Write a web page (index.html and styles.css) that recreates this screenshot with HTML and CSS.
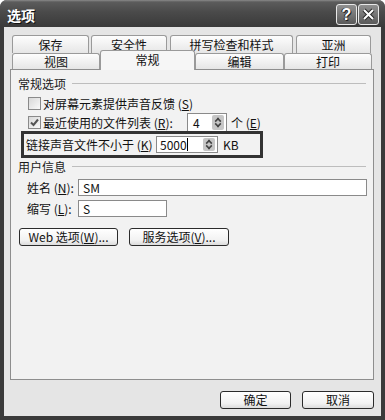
FILE: index.html
```html
<!DOCTYPE html>
<html lang="zh-CN">
  <head>
    <meta charset="UTF-8" />
    <title>选项</title>
    <link rel="stylesheet" href="styles.css">
  </head>
  <body>
    <div class="window">
      <div class="titlebar">
        <span class="title">选项</span>
        <span class="tb-btn help">?</span>
        <span class="tb-btn close">
          <svg width="13" height="13" viewBox="0 0 13 13">
            <path d="M2 2 L11 11 M11 2 L2 11" stroke="#2a2a2a" stroke-width="4" />
            <path d="M2 2 L11 11 M11 2 L2 11" stroke="#fff" stroke-width="2" />
          </svg>
        </span>
      </div>

      <div class="client">
        <div class="tabs">
          <div class="tab-row back">
            <div class="tab w77">保存</div>
            <div class="tab w76 gap2">安全性</div>
            <div class="tab w123 gap3">拼写检查和样式</div>
            <div class="tab w75 gap3">亚洲</div>
          </div>
          <div class="tab-row front">
            <div class="tab w88">视图</div>
            <div class="tab w95 selected">常规</div>
            <div class="tab w89">编辑</div>
            <div class="tab w88">打印</div>
          </div>
        </div>

        <div class="panel">
          <div class="group-title first"><span>常规选项</span><i class="rule"></i></div>

          <div class="row cb-row first-cb">
            <span class="checkbox"></span>
            <span>对屏幕元素提供声音反馈 (<u>S</u>)</span>
          </div>

          <div class="row cb-row second-cb">
            <span class="checkbox checked">
              <svg width="11" height="11" viewBox="0 0 11 11">
                <path d="M2 5.5 L4.5 8 L9 2.5" fill="none" stroke="#555" stroke-width="2" />
              </svg>
            </span>
            <span class="list-label">最近使用的文件列表 (<u>R</u>):</span>
            <span class="field spin-field small">
              <span class="value">4</span>
              <span class="spin"></span>
            </span>
            <span class="after">个 (<u>E</u>)</span>
          </div>

          <div class="highlight">
            <span class="link-label">链接声音文件不小于 (<u>K</u>)</span>
            <span class="field spin-field mid">
              <span class="value">5000<i class="caret"></i></span>
              <span class="spin"></span>
            </span>
            <span class="after">KB</span>
          </div>

          <div class="group-title"><span>用户信息</span><i class="rule"></i></div>

          <div class="row text-row name-row">
            <span class="text-label">姓名 (<u>N</u>):</span>
            <span class="field wide"><span class="value">SM</span></span>
          </div>
          <div class="row text-row abbr-row">
            <span class="text-label">缩写 (<u>L</u>):</span>
            <span class="field narrow"><span class="value">S</span></span>
          </div>

          <div class="row btn-row">
            <button class="btn web">Web 选项(<u>W</u>)...</button>
            <button class="btn service">服务选项(<u>V</u>)...</button>
          </div>
        </div>

        <div class="footer">
          <button class="btn ok">确定</button>
          <button class="btn cancel">取消</button>
        </div>
      </div>
    </div>
  </body>
</html>
```

FILE: styles.css
```css
body {
  margin: 0;
  background: #fff;
  font-family: "Noto Sans CJK SC", "Liberation Sans", sans-serif;
  font-size: 12px;
  color: #111;
}

.window {
  width: 385px;
  height: 420px;
  background: #3a3a3a;
  border-radius: 7px 7px 0 0;
  display: flex;
  flex-direction: column;
  overflow: hidden;
}

/* title bar */
.titlebar {
  height: 27px;
  flex: none;
  box-sizing: border-box;
  padding: 2px 6px 0 7px;
  display: flex;
  align-items: center;
  background: linear-gradient(#8a8a8a 0, #5c5c5c 2px, #4a4a4a 45%, #3a3a3a 100%);
}
.title {
  flex: 1;
  color: #fff;
  font-size: 14px;
  font-weight: bold;
  text-shadow: 1px 1px 0 #111;
}
.tb-btn {
  width: 21px;
  height: 21px;
  box-sizing: border-box;
  margin-left: 1px;
  border: 1px solid #e8e8e8;
  border-radius: 3px;
  background: linear-gradient(#909090, #5a5a5a);
  display: flex;
  align-items: center;
  justify-content: center;
}
.help {
  color: #fff;
  font-family: "Liberation Sans", sans-serif;
  font-size: 16px;
  font-weight: bold;
  text-shadow: 1px 1px 0 #222, -1px 0 0 #222;
}

/* client area */
.client {
  flex: 1;
  margin: 0 4px 4px;
  background: #e5e5e5;
  display: flex;
  flex-direction: column;
}

.tabs {
  margin-top: 8px;
  padding-left: 8px;
}
.tab-row {
  display: flex;
}
.tab-row.back {
  height: 18px;
}
.tab-row.front {
  height: 20px;
  margin-top: -3px;
}
.tab {
  box-sizing: border-box;
  height: 18px;
  line-height: 17px;
  text-align: center;
  border: 1px solid #9a9a9a;
  border-bottom: none;
  border-radius: 3px 3px 0 0;
  background: linear-gradient(#fdfdfd, #e6e6e6);
}
.front .tab {
  height: 16px;
  line-height: 16px;
  margin-top: 3px;
}
.front .tab.selected {
  position: relative;
  z-index: 1;
  height: 20px;
  margin-top: 0;
  line-height: 18px;
  background: #f6f6f6;
}
.w75 { width: 75px; }
.w76 { width: 76px; }
.w77 { width: 77px; }
.w88 { width: 88px; }
.w89 { width: 89px; }
.w95 { width: 95px; }
.w123 { width: 123px; }
.gap2 { margin-left: 2px; }
.gap3 { margin-left: 3px; }

/* page */
.panel {
  flex: 1;
  margin: -1px 7px 0 6px;
  border: 1px solid #8e8e8e;
  background: #f2f2f2;
  display: flex;
  flex-direction: column;
}

.group-title {
  height: 16px;
  padding: 0 7px;
  display: flex;
  align-items: center;
  color: #1a1a1a;
}
.group-title.first {
  margin-top: 5px;
}
.rule {
  flex: 1;
  height: 1px;
  margin-left: 6px;
  background: #bdbdbd;
}

.row {
  display: flex;
  align-items: center;
}
.cb-row {
  padding-left: 17px;
}
.first-cb {
  height: 16px;
  margin-top: 4px;
}
.second-cb {
  height: 18px;
  margin-top: 2px;
}
.checkbox {
  width: 13px;
  height: 13px;
  box-sizing: border-box;
  margin-right: 2px;
  border: 1px solid #8a8a8a;
  background: linear-gradient(135deg, #d8d8d8, #fafafa);
  display: flex;
  align-items: center;
  justify-content: center;
}
.list-label {
  width: 144px;
}
.after {
  margin-left: 4px;
}

.field {
  box-sizing: border-box;
  height: 17px;
  border: 1px solid #8a8a8a;
  background: #fff;
  display: flex;
  align-items: center;
  padding-left: 3px;
}
.value {
  flex: 1;
  display: flex;
  align-items: center;
}
.spin-field {
  padding-right: 2px;
}
.spin-field.small {
  width: 40px;
  height: 19px;
  padding-left: 5px;
}
.spin-field.mid {
  width: 62px;
}
.spin {
  width: 12px;
  height: 13px;
  border-radius: 2px;
  background: #c6c6c6;
  position: relative;
}
.small .spin {
  height: 15px;
}
.spin::before,
.spin::after {
  content: "";
  position: absolute;
  left: 3px;
  width: 4px;
  height: 4px;
  border: solid #444;
  border-width: 2px 2px 0 0;
}
.spin::before {
  top: 2px;
  transform: rotate(-45deg) scale(0.8);
}
.spin::after {
  bottom: 2px;
  transform: rotate(135deg) scale(0.8);
}
.small .spin::before {
  top: 3px;
}
.small .spin::after {
  bottom: 3px;
}
.caret {
  width: 1px;
  height: 13px;
  background: #000;
}

.highlight {
  box-sizing: border-box;
  width: 242px;
  height: 27px;
  margin-left: 10px;
  padding-left: 2px;
  border: 3px solid #333;
  display: flex;
  align-items: center;
}
.link-label {
  width: 130px;
}
.highlight .after {
  margin-left: 5px;
}

.text-row {
  padding-left: 16px;
}
.name-row {
  margin-top: 5px;
}
.abbr-row {
  margin-top: 4px;
}
.text-label {
  width: 51px;
}
.field.wide {
  width: 289px;
  padding-left: 4px;
}
.field.narrow {
  width: 89px;
  padding-left: 4px;
}

.btn-row {
  margin-top: 11px;
  padding-left: 8px;
  gap: 11px;
}
.btn {
  box-sizing: border-box;
  height: 18px;
  padding: 0;
  border: 1px solid #2b2b2b;
  border-radius: 3px;
  background: linear-gradient(#ffffff, #f2f2f2 70%, #dcdcdc);
  font-family: "Noto Sans CJK SC", "Liberation Sans", sans-serif;
  font-size: 12px;
  line-height: 16px;
  color: #111;
}
.btn.web {
  width: 99px;
}
.btn.service {
  width: 100px;
}

.footer {
  display: flex;
  justify-content: flex-end;
  gap: 11px;
  padding: 11px 7px 7px;
}
.btn.ok {
  width: 71px;
}
.btn.cancel {
  width: 72px;
}
```
